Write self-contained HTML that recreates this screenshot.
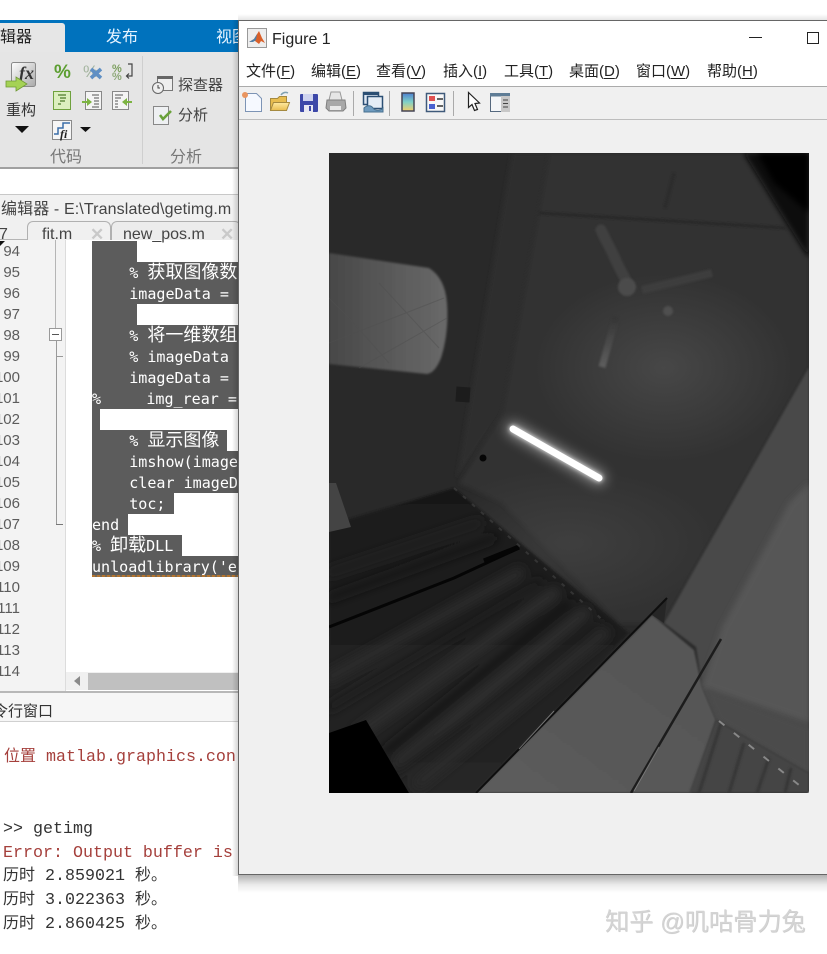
<!DOCTYPE html>
<html lang="zh"><head><meta charset="utf-8"><title>Figure 1</title>
<style>
html,body{margin:0;padding:0;background:#fff}
#p{position:relative;width:827px;height:954px;overflow:hidden;background:#fff;font-family:"Liberation Sans","Noto Sans CJK SC",sans-serif;color:#333}
#p div,#p span.a{position:absolute}
.t{white-space:pre;line-height:20px}
.ln{left:-30px;width:50px;text-align:right;font-size:15px;line-height:21px;color:#5c5c5c;height:21px}
.sel{background:#5c5c5c;height:21px;left:92px}
.c{left:92px;white-space:pre;font:15.06px/21px "DejaVu Sans Mono","Noto Sans CJK SC",monospace;color:#fff;height:21px}
.c b{font-weight:normal;font-size:18px;font-family:"Noto Sans CJK SC",sans-serif;line-height:0}
.con{left:3px;white-space:pre;font:16.67px/24px "Liberation Mono","Noto Serif CJK SC",monospace;color:#333}
.con b{font-weight:normal;font-family:"Noto Sans CJK SC",sans-serif;font-size:16px;line-height:0}
.r{color:#a5403c}
.m{top:62px;font-size:15px;line-height:20px;white-space:pre;color:#222}
.m u{text-underline-offset:2px}
</style></head><body><div id="p">

<!-- ribbon -->
<div style="left:0;top:20px;width:240px;height:32px;background:#0072bd"></div>
<div style="left:0;top:23px;width:65px;height:29px;background:#e6e6e6;border-top-right-radius:3px"></div>
<div class="t" style="left:-16px;top:28px;font-size:16px;color:#222">编辑器</div>
<div class="t" style="left:106px;top:28px;font-size:16px;color:#e6f3ff">发布</div>
<div class="t" style="left:216px;top:28px;font-size:16px;color:#e6f3ff">视图</div>
<div style="left:0;top:52px;width:240px;height:115px;background:#e5e5e5"></div>
<div style="left:0;top:167px;width:240px;height:2px;background:#a0a0a0"></div>
<div style="left:142px;top:56px;width:1px;height:108px;background:#cfcfcf"></div>
<div class="t" style="left:6px;top:101px;font-size:15px;color:#333">重构</div>
<div class="t" style="left:178px;top:76px;font-size:15px;color:#444">探查器</div>
<div class="t" style="left:178px;top:106px;font-size:15px;color:#444">分析</div>
<div class="t" style="left:50px;top:148px;font-size:16px;color:#777">代码</div>
<div class="t" style="left:170px;top:148px;font-size:16px;color:#777">分析</div>

<svg style="position:absolute;left:0;top:0" width="240" height="170" viewBox="0 0 240 170">
 <defs><linearGradient id="g1" x1="0" y1="0" x2="1" y2="1"><stop offset="0" stop-color="#fff"/><stop offset="1" stop-color="#a9a9a9"/></linearGradient></defs>
 <rect x="11.500" y="62.500" width="24" height="24" rx="2" fill="url(#g1)" stroke="#8a8a8a"/>
 <text x="19" y="79" font-family="Liberation Serif" font-style="italic" font-weight="bold" font-size="18" fill="#333">fx</text>
 <path d="M6 81h10v-4l11 7-11 7v-4H6z" fill="#a5d255" stroke="#6f9a35" stroke-width=".8"/>
 <path d="M15 126h14l-7 7z" fill="#111"/>
 <text x="54" y="78" font-family="Liberation Sans" font-weight="bold" font-size="19" fill="#5c9e31">%</text>
 <text x="83" y="77" font-family="Liberation Sans" font-size="17" fill="#a5b5a0">%</text>
 <path d="M91 69l10 9M101 69l-10 9" stroke="#5f8fc4" stroke-width="3.600"/>
 <text x="112" y="72" font-family="Liberation Sans" font-weight="bold" font-size="11" fill="#7d9f5f">%</text>
 <text x="112" y="80" font-family="Liberation Sans" font-weight="bold" font-size="11" fill="#8fa97a">%</text>
 <path d="M128 64h4v12h-5m2-2.500l-2.500 2.500 2.500 2.500" fill="none" stroke="#444" stroke-width="1.200"/>
 <rect x="53.500" y="91.500" width="17" height="18" fill="#dcefbf" stroke="#6fa13e"/>
 <path d="M58 95h8M60 98h6M60 101h5M58 104h3" stroke="#4b7a2a" stroke-width="1.200"/>
 <rect x="85.500" y="91.500" width="16" height="18" fill="#f4f4f4" stroke="#888"/>
 <path d="M92 95h7M94 98h5M94 101h5M94 104h5M92 107h7" stroke="#555"/>
 <path d="M82 101h5v-3l5 4-5 4v-3h-5z" fill="#7cb342"/>
 <rect x="112.500" y="91.500" width="16" height="18" fill="#f4f4f4" stroke="#888"/>
 <path d="M115 95h8M115 98h6M115 101h3M115 104h3M115 107h3" stroke="#555"/>
 <path d="M132 101h-5v-3l-5 4 5 4v-3h5z" fill="#7cb342"/>
 <rect x="52.500" y="120.500" width="19" height="19" fill="#f6f6f6" stroke="#8a8a8a"/>
 <path d="M54 134h4v-6h5v-5h7" fill="none" stroke="#3b6ea8" stroke-width="1.500"/>
 <text x="60" y="138" font-family="Liberation Serif" font-style="italic" font-weight="bold" font-size="12" fill="#222">fi</text>
 <path d="M80 127h11l-5.500 5z" fill="#111"/>
 <rect x="157.500" y="76.500" width="15" height="14" fill="#eee" stroke="#777"/>
 <rect x="157" y="76" width="16" height="3" fill="#666"/>
 <circle cx="158" cy="88" r="5.500" fill="#eee" stroke="#666"/>
 <path d="M158 85v3h2" stroke="#444" fill="none"/>
 <rect x="153.500" y="106.500" width="15" height="18" fill="#eef0f2" stroke="#888"/>
 <path d="M160 115l3 4 8-8" fill="none" stroke="#6aa23a" stroke-width="2.600"/>
</svg>

<div style="left:0;top:169px;width:240px;height:25px;background:#fff"></div>
<div style="left:0;top:194px;width:240px;height:1px;background:#c8c8c8"></div>
<div style="left:0;top:195px;width:240px;height:25px;background:#f1f1f1"></div>
<div class="t" style="left:1px;top:200px;font-size:16px;color:#444;letter-spacing:.12px">编辑器 - E:\Translated\getimg.m</div>
<div style="left:0;top:220px;width:240px;height:20px;background:#f0f0f0"></div>
<div style="left:0;top:239px;width:240px;height:1px;background:#b5b5b5"></div>
<div style="left:27px;top:221px;width:84px;height:19px;border:1px solid #b0b0b0;border-bottom:none;border-radius:6px 6px 0 0;box-sizing:border-box;background:#f0f0f0"></div>
<div style="left:111px;top:221px;width:130px;height:19px;border:1px solid #b0b0b0;border-bottom:none;border-radius:6px 6px 0 0;box-sizing:border-box;background:#ececec"></div>
<div class="t" style="left:-1px;top:225px;font-size:16px;color:#444">7</div>
<div class="t" style="left:42px;top:225px;font-size:16px;color:#444">fit.m</div>
<div class="t" style="left:123px;top:225px;font-size:16px;color:#444">new_pos.m</div>
<div class="t" style="left:90px;top:225px;font-size:17px;font-weight:bold;color:#c9c9c9">✕</div>
<div class="t" style="left:220px;top:225px;font-size:17px;font-weight:bold;color:#c9c9c9">✕</div>

<!-- editor -->
<div style="left:0;top:240px;width:66px;height:452px;background:#f3f3f3"></div>
<div style="left:55px;top:240px;width:1px;height:88px;background:#b5b5b5"></div>
<div style="left:56px;top:341px;width:1px;height:183px;background:#999"></div>
<div style="left:56px;top:356px;width:7px;height:1px;background:#999"></div>
<div style="left:56px;top:524px;width:7px;height:1px;background:#777"></div>
<div style="left:49px;top:328px;width:13px;height:13px;background:#fff;border:1px solid #999;box-sizing:border-box"></div>
<div style="left:52px;top:334px;width:7px;height:1px;background:#555"></div>
<div style="left:65px;top:240px;width:1px;height:452px;background:#dcdcdc"></div>
<div style="left:0;top:241px;width:0;height:0;border-top:5px solid #111;border-right:5px solid transparent"></div>

<div class="ln" style="top:241px">94</div><div class="ln" style="top:262px">95</div><div class="ln" style="top:283px">96</div><div class="ln" style="top:304px">97</div><div class="ln" style="top:325px">98</div><div class="ln" style="top:346px">99</div><div class="ln" style="top:367px">100</div><div class="ln" style="top:388px">101</div><div class="ln" style="top:409px">102</div><div class="ln" style="top:430px">103</div><div class="ln" style="top:451px">104</div><div class="ln" style="top:472px">105</div><div class="ln" style="top:493px">106</div><div class="ln" style="top:514px">107</div><div class="ln" style="top:535px">108</div><div class="ln" style="top:556px">109</div><div class="ln" style="top:577px">110</div><div class="ln" style="top:598px">111</div><div class="ln" style="top:619px">112</div><div class="ln" style="top:640px">113</div><div class="ln" style="top:661px">114</div>

<div class="sel" style="top:241px;width:45px"></div>
<div class="sel" style="top:262px;width:146px"></div>
<div class="sel" style="top:283px;width:146px"></div>
<div class="sel" style="top:304px;width:45px"></div>
<div class="sel" style="top:325px;width:146px;height:84px"></div>
<div class="sel" style="top:409px;width:8px"></div>
<div class="sel" style="top:430px;width:135px"></div>
<div class="sel" style="top:451px;width:146px;height:42px"></div>
<div class="sel" style="top:493px;width:82px"></div>
<div class="sel" style="top:514px;width:36px"></div>
<div class="sel" style="top:535px;width:90px"></div>
<div class="sel" style="top:556px;width:146px"></div>
<div style="left:92px;top:575px;width:146px;height:2px;background:repeating-linear-gradient(90deg,#b5752f 0 3px,#7a6a55 3px 5px)"></div>
<div style="left:92px;top:240px;width:146px;height:440px;overflow:hidden">
 <div class="c" style="left:1px;top:23px">    % <b>获取图像数</b></div>
 <div class="c" style="left:1px;top:44px">    imageData = </div>
 <div class="c" style="left:1px;top:86px">    % <b>将一维数组</b></div>
 <div class="c" style="left:1px;top:107px">    % imageData </div>
 <div class="c" style="left:1px;top:128px">    imageData = </div>
 <div class="c" style="left:0;top:149px">%     img_rear =</div>
 <div class="c" style="left:1px;top:191px">    % <b>显示图像</b></div>
 <div class="c" style="left:1px;top:212px">    imshow(image</div>
 <div class="c" style="left:1px;top:233px">    clear imageD</div>
 <div class="c" style="left:1px;top:254px">    toc;</div>
 <div class="c" style="left:0;top:275px">end</div>
 <div class="c" style="left:0;top:296px">% <b>卸载</b>DLL</div>
 <div class="c" style="left:0;top:317px">unloadlibrary('e</div>
</div>

<div style="left:66px;top:672px;width:174px;height:18px;background:#f0f0f0"></div>
<div style="left:74px;top:676px;width:0;height:0;border-right:6px solid #8a8a8a;border-top:5px solid transparent;border-bottom:5px solid transparent"></div>
<div style="left:88px;top:673px;width:150px;height:17px;background:#c0c0c0"></div>
<div style="left:0;top:691px;width:240px;height:2px;background:#b8b8b8"></div>

<!-- command window -->
<div style="left:0;top:693px;width:240px;height:28px;background:#f6f6f6"></div>
<div style="left:0;top:721px;width:240px;height:1px;background:#d0d0d0"></div>
<div class="t" style="left:-22px;top:702px;font-size:15px;color:#333">命令行窗口</div>
<div class="con r" style="left:4px;top:746px"><b>位置</b> matlab.graphics.con</div>
<div class="con" style="top:818px">&gt;&gt; getimg</div>
<div class="con r" style="top:842px">Error: Output buffer is</div>
<div class="con" style="top:865px"><b>历时</b> 2.859021 <b>秒。</b></div>
<div class="con" style="top:889px"><b>历时</b> 3.022363 <b>秒。</b></div>
<div class="con" style="top:913px"><b>历时</b> 2.860425 <b>秒。</b></div>

<!-- figure window shadows -->
<div style="left:232px;top:20px;width:6px;height:856px;background:linear-gradient(90deg,rgba(0,0,0,0),rgba(0,0,0,.16))"></div>
<div style="left:238px;top:14px;width:589px;height:6px;background:linear-gradient(180deg,rgba(0,0,0,0),rgba(0,0,0,.1))"></div>
<div style="left:238px;top:875px;width:589px;height:18px;background:linear-gradient(180deg,rgba(0,0,0,.3),rgba(0,0,0,.08) 55%,rgba(0,0,0,0))"></div>

<!-- figure window -->
<div style="left:238px;top:20px;width:600px;height:855px;background:#f0f0f0;border:1px solid #666;box-sizing:border-box"></div>
<div style="left:239px;top:21px;width:588px;height:65px;background:#fff"></div>
<div style="left:239px;top:86px;width:588px;height:1px;background:#ababab"></div>
<div style="left:239px;top:119px;width:588px;height:1px;background:#bdbdbd"></div>

<svg style="position:absolute;left:247px;top:28px" width="20" height="20" viewBox="0 0 20 20">
 <rect x=".5" y=".5" width="19" height="19" fill="#eee" stroke="#999"/>
 <path d="M2 14l5-3 5-8 3 7 3 5-4-2-2 3-4-3z" fill="#d9602a"/>
 <path d="M2 14l5-3 3-5-1 6-3 2z" fill="#4f7fa8"/>
</svg>
<div class="t" style="left:272px;top:30px;font-size:16px;color:#222">Figure 1</div>
<div style="left:749px;top:37px;width:13px;height:1px;background:#222"></div>
<div style="left:807px;top:32px;width:12px;height:12px;border:1px solid #222;box-sizing:border-box"></div>

<div class="m" style="left:246px">文件(<u>F</u>)</div>
<div class="m" style="left:311px">编辑(<u>E</u>)</div>
<div class="m" style="left:376px">查看(<u>V</u>)</div>
<div class="m" style="left:443px">插入(<u>I</u>)</div>
<div class="m" style="left:504px">工具(<u>T</u>)</div>
<div class="m" style="left:569px">桌面(<u>D</u>)</div>
<div class="m" style="left:636px">窗口(<u>W</u>)</div>
<div class="m" style="left:707px">帮助(<u>H</u>)</div>

<svg style="position:absolute;left:238px;top:87px" width="290" height="32" viewBox="238 87 290 32">
 <defs>
  <linearGradient id="cb" x1="0" y1="0" x2="0" y2="1"><stop offset="0" stop-color="#4d7fd0"/><stop offset=".5" stop-color="#7fd0c8"/><stop offset="1" stop-color="#f3cf6a"/></linearGradient>
  <linearGradient id="fo" x1="0" y1="0" x2="0" y2="1"><stop offset="0" stop-color="#ffeaa0"/><stop offset="1" stop-color="#e8bd4f"/></linearGradient>
 </defs>
 <path d="M245.500 93.500h11l5 5v13h-16z" fill="#f6f9ff" stroke="#7d94b5"/>
 <circle cx="245" cy="95" r="3" fill="#e99560"/>
 <path d="M270.500 98.500h7l2-2h7v14h-16z" fill="#e8bd4f" stroke="#a58a40"/>
 <path d="M270.500 110.500l3-8h16l-3 8z" fill="url(#fo)" stroke="#a58a40"/>
 <path d="M281 95c2-3 5-3 7-2" fill="none" stroke="#7fa0b0" stroke-width="1.500"/>
 <rect x="300" y="94" width="18" height="18" rx="1" fill="#3d48a8"/>
 <rect x="303" y="94" width="10" height="7" fill="#cfd4ef"/>
 <rect x="304" y="105" width="9" height="7" fill="#e8e8f2"/>
 <rect x="309" y="106" width="2" height="5" fill="#3d48a8"/>
 <path d="M331 92h9l2 8h-13z" fill="#e6e6e6" stroke="#999"/>
 <path d="M327 100h18l1 8-3 3h-14l-3-3z" fill="#a8a8a8" stroke="#808080"/>
 <rect x="330" y="106" width="11" height="4" fill="#e8e8e8"/>
 <rect x="363.500" y="92.500" width="15" height="12" fill="#dde7f3" stroke="#2c4f74" stroke-width="1.500"/>
 <rect x="363" y="92" width="16" height="3" fill="#2c4f74"/>
 <rect x="367.500" y="96.500" width="15" height="12" fill="#e5edf6" stroke="#2c4f74" stroke-width="1.500"/>
 <path d="M364 108c3-3 7-3 9 0s8 3 10 0v4h-19z" fill="#6f9bbf" stroke="#47708f"/>
 <rect x="353" y="91" width="1" height="25" fill="#aaa"/>
 <rect x="389" y="91" width="1" height="25" fill="#aaa"/>
 <rect x="453" y="91" width="1" height="25" fill="#aaa"/>
 <rect x="402" y="93" width="12" height="18" fill="url(#cb)" stroke="#445" stroke-width="1.500"/>
 <rect x="426.500" y="93.500" width="18" height="18" fill="#f8f8f8" stroke="#3f5a7a" stroke-width="1.500"/>
 <rect x="429" y="96" width="6" height="5" fill="#e05050"/><rect x="429" y="104" width="6" height="5" fill="#4a62d0"/>
 <path d="M437 99h6M437 106h6" stroke="#333" stroke-width="1.500"/>
 <path d="M468.500 92.500v15l3.500-3 2.500 6 3-1-2.500-6 4.500-.5z" fill="#fff" stroke="#222" stroke-width="1.200"/>
 <rect x="490.500" y="93.500" width="19" height="18" fill="#f4f6f8" stroke="#55697f"/>
 <rect x="490" y="93" width="20" height="3.500" fill="#5f7d96"/>
 <rect x="501" y="96" width="9" height="16" fill="#c8c8c8"/>
 <path d="M503 100h5M503 103.500h5M503 107h5" stroke="#444"/>
</svg>

<!-- photo -->
<svg style="position:absolute;left:329px;top:153px" width="480" height="640" viewBox="0 0 480 640">
 <defs>
  <filter id="b1" x="-30%" y="-30%" width="160%" height="160%"><feGaussianBlur stdDeviation="1"/></filter>
  <filter id="b2" x="-30%" y="-30%" width="160%" height="160%"><feGaussianBlur stdDeviation="2"/></filter>
  <filter id="b3" x="-30%" y="-30%" width="160%" height="160%"><feGaussianBlur stdDeviation="3"/></filter>
  <filter id="b5" x="-30%" y="-30%" width="160%" height="160%"><feGaussianBlur stdDeviation="5"/></filter>
  <filter id="b6" x="-50%" y="-50%" width="200%" height="200%"><feGaussianBlur stdDeviation="6"/></filter>
  <linearGradient id="w" x1="0" y1="0" x2="1" y2="0"><stop offset="0" stop-color="#484848"/><stop offset="1" stop-color="#696969"/></linearGradient>
  <linearGradient id="bl3" x1="0" y1="0" x2="0" y2="1"><stop offset="0" stop-color="#353535"/><stop offset="1" stop-color="#5e5e5e"/></linearGradient>
  <linearGradient id="pan" x1="1" y1="0" x2="0" y2="1"><stop offset="0" stop-color="#555"/><stop offset="1" stop-color="#5c5c5c"/></linearGradient>
  <radialGradient id="gl"><stop offset="0" stop-color="#474747"/><stop offset="1" stop-color="#474747" stop-opacity="0"/></radialGradient>
  <linearGradient id="cur" x1="0" y1="0" x2="0" y2="1"><stop offset="0" stop-color="#191919"/><stop offset="1" stop-color="#262626"/></linearGradient>
 </defs>
 <rect width="480" height="640" fill="#292929"/>
 <polygon points="183,0 220,0 173,260 128,325" fill="#2e2e2e" filter="url(#b2)"/>
 <polygon points="220,0 415,0 480,105 480,214 335,470 290,470 173,350 130,330 173,260" fill="#303030" filter="url(#b2)"/>
 <ellipse cx="335" cy="215" rx="130" ry="95" fill="url(#gl)"/>
 <ellipse cx="240" cy="390" rx="150" ry="75" fill="url(#gl)" opacity=".6"/>
 <polygon points="415,0 480,0 480,105 458,70" fill="#0b0b0b" filter="url(#b3)"/>
 <polygon points="428,0 480,0 480,60 445,30" fill="#000" filter="url(#b3)"/>
 <path d="M210 60L457 75" stroke="#252525" stroke-width="2.500" filter="url(#b1)"/>
 <path d="M345 20L336 55" stroke="#2a2a2a" stroke-width="3" filter="url(#b1)"/>
 <!-- window -->
 <path d="M0 100L100 115Q116 125 118 150Q120 180 112 205Q106 220 98 221L0 211Z" fill="url(#w)" filter="url(#b1)"/>
 <path d="M0 145L20 165 60 210M50 130L110 195M0 190L115 145M30 215L118 165" stroke="#505050" stroke-width="1" fill="none" opacity=".5"/>
 <!-- fan -->
 <path d="M272 77L300 134" stroke="#414141" stroke-width="11" stroke-linecap="round" filter="url(#b1)"/>
 <path d="M313 137L383 120" stroke="#3d3d3d" stroke-width="8" filter="url(#b1)"/>
 <path d="M287 164L273 214" stroke="url(#bl3)" stroke-width="7" filter="url(#b1)"/>
 <circle cx="298" cy="134" r="9" fill="#4c4c4c" filter="url(#b1)"/>
 <circle cx="339" cy="158" r="5" fill="#505050" filter="url(#b1)"/>
 <rect x="127" y="234" width="14" height="15" fill="#1c1c1c" transform="rotate(4 134 241)"/>
 <circle cx="154" cy="305" r="3.500" fill="#060606"/>
 <!-- right column & wall -->
 <polygon points="480,214 335,470 367,494 373,534 387,567 480,620" fill="#4a4a4a" filter="url(#b1)"/>
 <polygon points="480,330 460,350 393,474 373,534 480,570" fill="#565656" filter="url(#b3)"/>
 <polygon points="376,536 480,575 480,620 390,567" fill="#4c4c4c" filter="url(#b2)"/>
 <!-- curtain -->
 <polygon points="0,372 125,335 300,480 147,640 0,640" fill="url(#cur)" filter="url(#b1)"/>
 <g stroke-linecap="round" fill="none" filter="url(#b5)">
  <path d="M0 420L150 370" stroke="#202020" stroke-width="8"/>
  <path d="M0 445L165 385" stroke="#141414" stroke-width="7"/>
  <path d="M0 525L190 420" stroke="#2c2c2c" stroke-width="12"/>
  <path d="M0 555L210 430" stroke="#1a1a1a" stroke-width="8"/>
  <path d="M30 580L225 440" stroke="#2f2f2f" stroke-width="12"/>
  <path d="M55 600L240 450" stroke="#191919" stroke-width="8"/>
  <path d="M70 610L255 460" stroke="#2e2e2e" stroke-width="12"/>
  <path d="M60 625L268 470" stroke="#1c1c1c" stroke-width="7"/>
  <path d="M90 630L275 480" stroke="#292929" stroke-width="12"/>
 </g>
 <path d="M0 474L125 425 190 395" stroke="#050505" stroke-width="3" fill="none"/>
 <path d="M155 408L190 394" stroke="#050505" stroke-width="5"/>
 <path d="M125 335L277 470" stroke="#444" stroke-width="2" stroke-dasharray="4 8" opacity=".6"/>
 <polygon points="0,580 37,567 80,640 0,640" fill="#000"/>
 <polygon points="0,379 22,374 7,330 0,330" fill="#444"/>
 <!-- panel -->
 <polygon points="323,462 365,497 373,534 387,567 362,640 147,640" fill="url(#pan)" filter="url(#b1)"/>
 <polygon points="323,462 338,445 335,470" fill="#262626"/>
 <path d="M147 640L338 445" stroke="#0e0e0e" stroke-width="2"/>
 <path d="M190 596L225 558" stroke="#aaa" stroke-width="1" opacity=".6"/>
 <path d="M302 640L392 486" stroke="#1c1c1c" stroke-width="2.500"/>
 <path d="M305 638L330 594" stroke="#999" stroke-width="1" opacity=".6"/>
 <!-- right curtain -->
 <polygon points="387,567 480,620 480,640 360,640" fill="#454545" filter="url(#b1)"/>
 <path d="M392 570L370 640M415 590L400 640M440 605L428 640M462 615L456 640" stroke="#363636" stroke-width="3" filter="url(#b1)"/>
 <path d="M390 568L480 640" stroke="#888" stroke-width="2" stroke-dasharray="7 12"/>
 <!-- lamp -->
 <path d="M184 276L270 325" stroke="#fff" stroke-width="14" stroke-linecap="round" filter="url(#b6)" opacity=".45"/>
 <path d="M184 276L270 325" stroke="#fff" stroke-width="8" stroke-linecap="round" filter="url(#b2)" opacity=".7"/>
 <path d="M184 276L270 325" stroke="#fff" stroke-width="7" stroke-linecap="round"/>
</svg>

<!-- watermark -->
<div class="t" style="left:605px;top:910px;font-size:24.200px;line-height:26px;color:#d4d4d4;text-shadow:.5px .5px .5px #c4c4c4">知乎 @叽咕骨力兔</div>
</div></body></html>
